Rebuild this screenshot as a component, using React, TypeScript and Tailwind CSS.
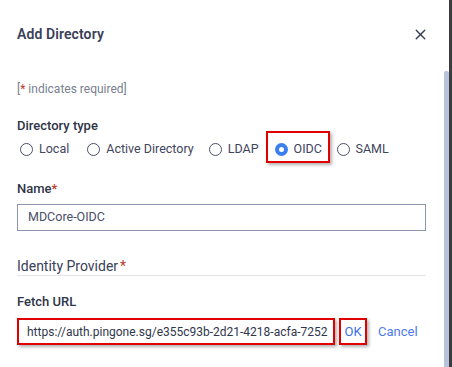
import React from 'react';
import { X } from 'lucide-react';

const types = ['Local', 'Active Directory', 'LDAP', 'OIDC', 'SAML'];

export default function App() {
  const selected = 'OIDC';

  return (
    <div className="flex h-[367px] w-[452px] bg-white text-[#2f3548]" style={{ fontFamily: 'Roboto, "Liberation Sans", sans-serif' }}>
      <div className="flex-1 pl-[17px] pr-[18px]">
        {/* Header */}
        <div className="flex h-[68px] items-center justify-between pt-[1px]">
          <h1 className="text-[14px] font-semibold tracking-[0.1px] text-[#3a4058]">Add Directory</h1>
          <button className="mr-[-3px] text-[#3a4058]">
            <X className="h-[17px] w-[17px]" strokeWidth={2} />
          </button>
        </div>

        <p className="mt-[13px] text-[12px] leading-[16px] text-[#7a7f8e]">
          [<span className="text-[#c0392b]">*</span> indicates required]
        </p>

        {/* Directory type */}
        <div className="mt-[21px] text-[13px] font-medium leading-[16px]">Directory type</div>
        <div className="mt-[-3px] flex h-[32px] items-center text-[12.5px] text-[#3f4560]">
          {types.map((t) => {
            const on = t === selected;
            const item = (
              <label className="flex items-center gap-[6px]">
                {on ? (
                  <span className="flex h-[13px] w-[13px] items-center justify-center rounded-full bg-[#3b7ef0]">
                    <span className="h-[5px] w-[5px] rounded-full bg-white" />
                  </span>
                ) : (
                  <span className="h-[13px] w-[13px] rounded-full border border-[#4a5068]" />
                )}
                {t}
              </label>
            );
            if (on) {
              return (
                <div key={t} className="mr-[7px] ml-[-8px] flex h-[32px] w-[64px] items-center border-[2px] border-[#e00000] pt-[4px] pl-[7px] shadow-[2px_2px_3px_rgba(0,0,0,0.3)]">
                  {item}
                </div>
              );
            }
            return (
              <div key={t} className={'pt-[4px] ' + (t === 'Local' ? 'ml-[3px] mr-[18px]' : 'mr-[15px]')}>
                {item}
              </div>
            );
          })}
        </div>

        {/* Name */}
        <div className="mt-[18px] text-[13px] font-medium leading-[16px]">
          Name<span className="text-[#c0392b]">*</span>
        </div>
        <div className="mt-[7px] flex h-[27px] items-center border border-[#8d94ad] px-[10px] text-[12.5px] text-[#4a4f66]">
          MDCore-OIDC
        </div>

        {/* Identity Provider */}
        <div className="mt-[26px] border-b border-[#e2e4ea] text-[14px] leading-[18px] text-[#3a4058]">
          Identity Provider<span className="ml-[2px] text-[#c0392b]">*</span>
        </div>

        <div className="mt-[18px] text-[13px] font-medium leading-[16px]">Fetch URL</div>
        <div className="mt-[8px] flex items-center">
          <div className="flex h-[27px] w-[318px] items-center overflow-hidden whitespace-nowrap border-[2px] border-[#e00000] px-[8px] text-[12px] text-[#30364c] shadow-[2px_2px_3px_rgba(0,0,0,0.3)]">
            https://auth.pingone.sg/e355c93b-2d21-4218-acfa-7252
          </div>
          <div className="ml-[4px] flex h-[27px] w-[28px] items-center justify-center border-[2px] border-[#e00000] text-[13px] text-[#3b6fe8] shadow-[2px_2px_3px_rgba(0,0,0,0.3)]">
            OK
          </div>
          <span className="ml-[11px] text-[13px] text-[#4d7af0]">Cancel</span>
        </div>
      </div>

      {/* Scrollbar */}
      <div className="w-[5px] bg-white pt-[71px]">
        <div className="h-full rounded-t-[2px] bg-[#b8c2dc]" />
      </div>
      <div className="w-[3px] bg-[#3c3c3e]" />
    </div>
  );
}
